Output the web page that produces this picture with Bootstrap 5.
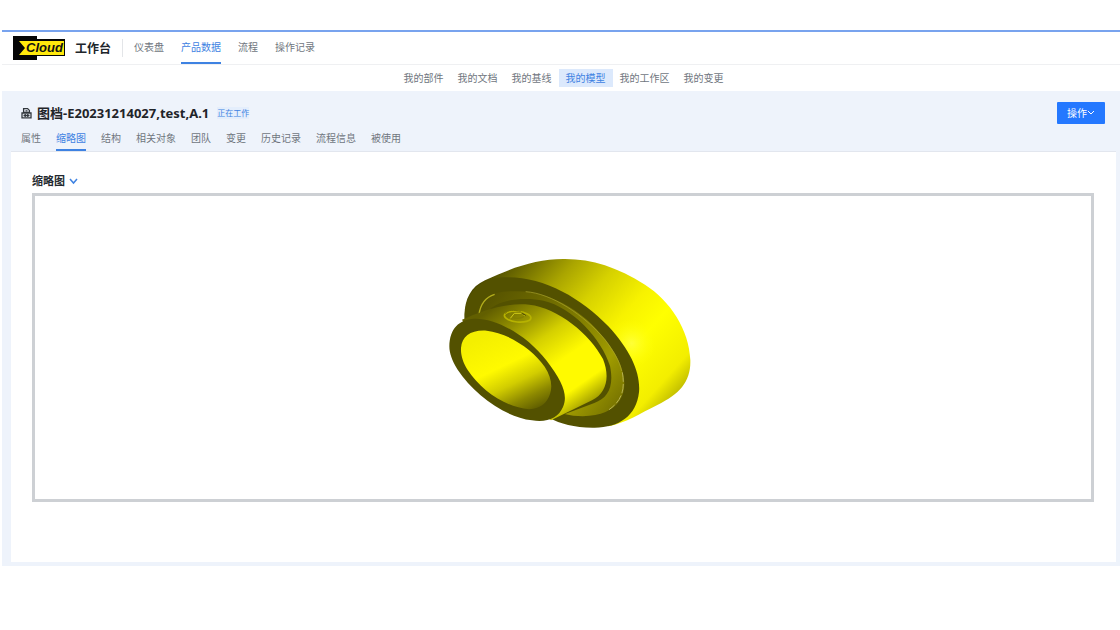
<!DOCTYPE html>
<html lang="zh-CN">
<head>
<meta charset="utf-8">
<meta name="viewport" content="width=device-width, initial-scale=1">
<title>工作台</title>
<link href="https://cdn.jsdelivr.net/npm/bootstrap@5.3.0/dist/css/bootstrap.min.css" rel="stylesheet">
<style>
  body { font: 10px/16px "Noto Sans", "Noto Sans CJK SC", sans-serif; color: #70767e; background: #fff; padding: 30px 0 64px 2px; }
  a { color: inherit; text-decoration: none; }
  .topbar { border-top: 2px solid #78a3ee; border-bottom: 1px solid #eff0f2; height: 35px; padding-left: 10px; }
  .product { font-size: 12px; font-weight: 700; color: #20252b; margin-left: 10px; padding-top: 2px; }
  .rule { width: 1px; height: 18px; background: #e3e5e8; margin: 0 11px; }
  .tabs { list-style: none; margin: 0; padding: 0; }
  .tabs a { display: block; border-bottom: 2px solid transparent; }
  .tabs a.active { color: #3e82e2; border-color: #3e82e2; }
  .main-tabs { gap: 17px; }
  .main-tabs a { padding: 7px 0; }
  .subnav { height: 26px; padding-left: 5px; }
  .subnav a { padding: 1px 7px; }
  .subnav a.active { color: #3e82e2; background: #dce9fc; }
  .workspace { background: #eef3fb; padding: 0 4px 4px 9px; }
  .heading { padding: 11px 11px 0 10px; }
  .heading h1 { font-size: 13px; line-height: 22px; font-weight: 700; color: #1f2429; margin: 0 8px 0 5px; }
  .state { font-size: 8px; line-height: 12px; color: #3e82e2; background: #e4eefc; }
  .action { font-size: 10px; line-height: 16px; padding: 3px 10px; color: #fff; background: #2478ff; border: 0; border-radius: 1px; }
  .detail-tabs { gap: 15px; padding-left: 10px; }
  .detail-tabs a { padding: 6px 0 3px; }
  .panel { background: #fff; border-top: 1px solid #e2e6ee; padding: 20px 22px 60px 21px; }
  .fold { border: 0; padding: 0; background: none; font-size: 11px; font-weight: 700; line-height: 18px; color: #24292f; }
  .preview { border: 3px solid #cdd0d4; height: 309px; margin-top: 3px; }
  .preview svg { width: 280px; height: 200px; margin: 0 0 6px 14px; }
</style>
</head>
<body>
<header>
  <nav class="topbar d-flex align-items-center" aria-label="主导航">
    <a href="#" aria-label="Cloud"><svg class="d-block" width="53" height="24" viewBox="0 0 53 24">
      <path fill="#050505" d="M1 0h24v3h28v17H25v4H1z"/>
      <path fill="#ffe90c" d="M7 5h45v14H7l6-7z"/>
      <text x="14" y="16" font-family="Liberation Sans, sans-serif" font-size="13" font-weight="700" font-style="italic" fill="#111">Cloud</text>
    </svg></a>
    <span class="product">工作台</span>
    <span class="rule"></span>
    <ul class="tabs main-tabs d-flex align-self-start">
      <li><a href="#">仪表盘</a></li>
      <li><a href="#" class="active">产品数据</a></li>
      <li><a href="#">流程</a></li>
      <li><a href="#">操作记录</a></li>
    </ul>
  </nav>
  <nav class="subnav d-flex justify-content-center align-items-center" aria-label="产品数据">
    <a href="#">我的部件</a>
    <a href="#">我的文档</a>
    <a href="#">我的基线</a>
    <a href="#" class="active">我的模型</a>
    <a href="#">我的工作区</a>
    <a href="#">我的变更</a>
  </nav>
</header>
<main class="workspace">
  <div class="heading d-flex align-items-center">
    <svg width="11" height="12" viewBox="0 0 11 12" fill="none" stroke="#32373d" stroke-width="1.3">
      <path d="M2.600 5.500V1.600h4l1.800 1.800v2.100M1 6h9v4.800H1zM2.600 5.500h6"/>
      <path d="M2.500 8.500h6M4.200 7v3M6.800 7v3M4.500 3.800h2"/>
    </svg>
    <h1>图档-E20231214027,test,A.1</h1>
    <span class="state">正在工作</span>
    <button type="button" class="action ms-auto d-flex align-items-center">操作<svg width="8" height="6" viewBox="0 0 8 6" fill="none" stroke="#fff"><path d="M1 1l3 3 3-3"/></svg></button>
  </div>
  <ul class="tabs detail-tabs d-flex">
    <li><a href="#">属性</a></li>
    <li><a href="#" class="active">缩略图</a></li>
    <li><a href="#">结构</a></li>
    <li><a href="#">相关对象</a></li>
    <li><a href="#">团队</a></li>
    <li><a href="#">变更</a></li>
    <li><a href="#">历史记录</a></li>
    <li><a href="#">流程信息</a></li>
    <li><a href="#">被使用</a></li>
  </ul>
  <section class="panel">
    <button type="button" class="fold d-flex align-items-center gap-1">缩略图<svg width="9" height="7" viewBox="0 0 9 7" fill="none" stroke="#3e82e2" stroke-width="1.5"><path d="M1 1l3.5 4L8 1"/></svg></button>
    <div class="preview d-flex justify-content-center align-items-center">
      <svg viewBox="0 0 840 600" role="img" aria-label="模型缩略图">
        <defs>
          <linearGradient id="shell" gradientUnits="userSpaceOnUse" x1="190" y1="70" x2="690" y2="520">
            <stop offset="0" stop-color="#4b4900"/><stop offset=".12" stop-color="#777400"/><stop offset=".25" stop-color="#aaa500"/><stop offset=".4" stop-color="#d6d100"/><stop offset=".57" stop-color="#f7f200"/><stop offset=".7" stop-color="#ffff00"/><stop offset=".9" stop-color="#f3ee00"/><stop offset="1" stop-color="#b9b500"/>
          </linearGradient>
          <radialGradient id="glow" gradientUnits="userSpaceOnUse" cx="605" cy="295" r="75">
            <stop offset="0" stop-color="#ffff38"/><stop offset="1" stop-color="#ffff00" stop-opacity="0"/>
          </radialGradient>
          <linearGradient id="tube" gradientUnits="userSpaceOnUse" x1="210" y1="175" x2="435" y2="500">
            <stop offset="0" stop-color="#625f00"/><stop offset=".2" stop-color="#949000"/><stop offset=".4" stop-color="#d5d000"/><stop offset=".62" stop-color="#fffa00"/><stop offset=".85" stop-color="#fffa00"/><stop offset="1" stop-color="#a9a500"/>
          </linearGradient>
          <linearGradient id="bore" gradientUnits="userSpaceOnUse" x1="190" y1="260" x2="310" y2="510">
            <stop offset="0" stop-color="#f4ef00"/><stop offset=".38" stop-color="#fffa00"/><stop offset=".6" stop-color="#d2cd00"/><stop offset=".8" stop-color="#8c8800"/><stop offset="1" stop-color="#535100"/>
          </linearGradient>
          <linearGradient id="groove" gradientUnits="userSpaceOnUse" x1="170" y1="160" x2="560" y2="470">
            <stop offset="0" stop-color="#565300"/><stop offset=".45" stop-color="#7b7700"/><stop offset=".8" stop-color="#a09c00"/><stop offset="1" stop-color="#7b7700"/>
          </linearGradient>
        </defs>
        <path id="outer-shell" fill="url(#shell)" d="M104 222C101 169 120 126 165 106C245 68 320 42 400 42C485 41 560 66 645 119C720 167 778 254 781 345C783 409 750 447 682 480C630 505 590 533 535 544L400 480Z"/>
        <circle cx="605" cy="295" r="75" fill="url(#glow)"/>
        <path fill="#535100" d="M104 222C103 157 137 101 220 97C335 91 452 157 535 244C604 319 632 386 627 442C619 515 564 550 488 548C432 547 391 537 358 518Z"/>
        <path fill="url(#groove)" d="M143 211C145 159 190 137 255 139C370 137 475 210 538 300C584 365 596 427 568 468C546 500 501 519 430 512C397 507 373 499 358 490Z"/>
        <path fill="none" stroke="#b2ad1c" stroke-width="4" d="M147 209C151 177 166 157 194 148"/>
        <path fill="none" stroke="#aaa52d" stroke-width="2" d="M287 140C365 145 462 210 525 284C552 320 568 347 575 378"/>
        <path fill="none" stroke="#b5b052" stroke-width="3" stroke-dasharray="28 7" d="M577 382C586 435 575 467 537 494"/>
        <path fill="#535100" d="M175 200C197 165 278 155 340 167C428 187 515 282 540 363C553 427 533 460 493 474L391 512Z"/>
        <path fill="url(#tube)" d="M96 224C154 199 222 172 298 179C383 188 480 267 519 342C540 394 531 445 486 466L363 526L220 430Z"/>
        <path fill="#535100" d="M58 304C59 251 87 223 133 221C202 219 293 274 350 347C397 408 415 451 399 486C384 520 351 533 306 526C221 515 133 449 82 373C66 347 58 325 58 304Z"/>
        <path fill="url(#bore)" d="M93 309C96 273 123 254 170 257C232 263 309 313 344 365C368 401 370 437 351 466C340 483 320 492 297 493C224 486 154 436 113 375C98 351 92 329 93 309Z"/>
        <g fill="none">
          <ellipse cx="263" cy="215" rx="40" ry="16" stroke="#b7b200" stroke-width="5" transform="rotate(6 263 215)"/>
          <ellipse cx="261" cy="211" rx="22" ry="9" stroke="#858100" stroke-width="4"/>
          <path d="M226 206C231 193 253 195 272 199" stroke="#777400" stroke-width="3"/>
          <path d="M241 220l12-15h22l10 8" stroke="#d2cc18" stroke-width="3"/>
          <path d="M275 205l12 6" stroke="#454300" stroke-width="3"/>
        </g>
      </svg>
    </div>
  </section>
</main>
<script src="https://cdn.jsdelivr.net/npm/bootstrap@5.3.0/dist/js/bootstrap.bundle.min.js"></script>
</body>
</html>
